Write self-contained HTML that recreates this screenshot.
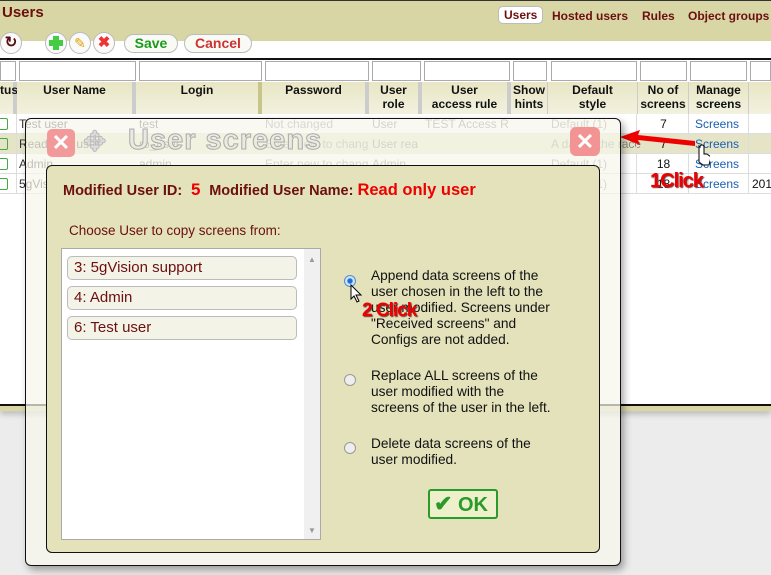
<!DOCTYPE html>
<html><head><meta charset="utf-8"><style>
*{box-sizing:border-box;margin:0;padding:0}
body{width:771px;height:575px;overflow:hidden;background:#ececec;font-family:"Liberation Sans",Arial,sans-serif;position:relative}
.abs{position:absolute}
#top{left:0;top:0;width:771px;height:41px;background:#d9d6a5;border-top:1px solid #333}
#tb{left:0;top:41px;width:771px;height:17px;background:#fff}
#main{left:0;top:58px;width:771px;height:348px;background:#fff;border-top:2px solid #111;border-bottom:2px solid #111}
#strip{left:0;top:406px;width:771px;height:5px;background:#d9d6a5;box-shadow:0 3px 6px rgba(0,0,0,.25)}
.tab{top:7px;font-size:12px;font-weight:bold;color:#6b0f0f}
.rb{border-radius:50%;border:1px solid #bbb;background:#fafafa;width:22px;height:22px;top:32px}
.pill{top:34px;height:19px;border:1px solid #bbb;border-radius:10px;background:#fafaf5;font-weight:bold;font-size:14px;text-align:center;line-height:17px}
.inp{top:61px;height:20px;border:1px solid #aaa;background:#fff}
.hd{top:82px;height:32px;background:linear-gradient(#e8e6c4,#f2f1df);font-weight:bold;font-size:12px;text-align:center;line-height:14px;padding-top:1px;color:#111;border-right:4px solid #ccc}
.chk{width:12px;height:12px;border:1px solid #4a4;border-radius:2px}
</style></head><body>
<div id="top" class="abs"></div>
<div class="abs" style="left:2px;top:4px;font-size:15px;font-weight:bold;color:#6b0f0f">Users</div>
<div class="abs tab" style="left:498px;top:6px;padding:1px 5px;border:1px solid #bbb;border-radius:5px;background:#fff">Users</div>
<div class="abs tab" style="left:552px;top:9px">Hosted users</div>
<div class="abs tab" style="left:642px;top:9px">Rules</div>
<div class="abs tab" style="left:688px;top:9px">Object groups</div>
<div id="tb" class="abs"></div>
<div class="abs rb" style="left:0;top:32px;font-size:15px;font-weight:bold;color:#5a1010;text-align:center;line-height:20px">↻</div>
<div class="abs rb" style="left:45px"><div class="abs" style="left:7px;top:3px;width:6px;height:14px;background:#4c4"></div><div class="abs" style="left:3px;top:7px;width:14px;height:6px;background:#4c4"></div></div>
<div class="abs rb" style="left:69px;color:#e3a000;font-size:14px;text-align:center;line-height:20px">✎</div>
<div class="abs rb" style="left:93px;color:#e33;font-size:15px;font-weight:bold;text-align:center;line-height:20px">✖</div>
<div class="abs pill" style="left:124px;width:54px;color:#1a9a1a">Save</div>
<div class="abs pill" style="left:184px;width:68px;color:#c33">Cancel</div>
<div id="main" class="abs"></div>
<div id="strip" class="abs"></div>
<div class="abs inp" style="left:0;width:16px"></div>
<div class="abs inp" style="left:19px;width:117px"></div>
<div class="abs inp" style="left:139px;width:123px"></div>
<div class="abs inp" style="left:265px;width:104px"></div>
<div class="abs inp" style="left:372px;width:49px"></div>
<div class="abs inp" style="left:424px;width:86px"></div>
<div class="abs inp" style="left:513px;width:34px"></div>
<div class="abs inp" style="left:551px;width:86px"></div>
<div class="abs inp" style="left:640px;width:47px"></div>
<div class="abs inp" style="left:690px;width:57px"></div>
<div class="abs inp" style="left:750px;width:21px"></div>
<div class="abs hd" style="left:0;width:17px;text-align:right">tus</div>
<div class="abs hd" style="left:17px;width:119px">User Name</div>
<div class="abs hd" style="left:136px;width:126px;border-right-color:#c8c58a">Login</div>
<div class="abs hd" style="left:262px;width:107px">Password</div>
<div class="abs hd" style="left:369px;width:53px">User<br>role</div>
<div class="abs hd" style="left:422px;width:89px">User<br>access rule</div>
<div class="abs hd" style="left:511px;width:37px;border-right-width:1px">Show<br>hints</div>
<div class="abs hd" style="left:548px;width:90px;border-right-width:1px">Default<br>style</div>
<div class="abs hd" style="left:638px;width:51px;border-right-width:1px">No of<br>screens</div>
<div class="abs hd" style="left:689px;width:60px;border-right-width:1px">Manage<br>screens</div>
<div class="abs hd" style="left:749px;width:22px;border-right-width:0"></div>
<div class="abs" style="left:0;top:114px;width:771px;height:80px">
 <div class="abs" style="left:0;top:20px;width:771px;height:20px;background:#e6e4c6"></div>
 <div class="abs" style="left:0;top:0;width:17px;height:80px;border-right:1px solid #ddd">
  <div class="chk abs" style="left:-4px;top:4px"></div><div class="chk abs" style="left:-4px;top:24px"></div><div class="chk abs" style="left:-4px;top:44px"></div><div class="chk abs" style="left:-4px;top:64px"></div></div>
 <div class="abs" style="left:0;top:19px;width:771px;border-top:1px solid #ddd"></div>
 <div class="abs" style="left:0;top:39px;width:771px;border-top:1px solid #ddd"></div>
 <div class="abs" style="left:0;top:59px;width:771px;border-top:1px solid #ddd"></div>
 <div class="abs" style="left:0;top:79px;width:771px;border-top:1px solid #ddd"></div>
 <div class="abs" style="left:19px;top:0;font-size:12px;line-height:20px;color:#333">Test user<br>Read only user<br>Admin<br>5gVision</div>
 <div class="abs" style="left:139px;top:0;font-size:12px;line-height:20px;color:#555">test<br>ro_user<br>admin</div>
 <div class="abs" style="left:265px;top:0;font-size:12px;line-height:20px;color:#888">Not changed<br>Enter new to chang<br>Enter new to chang</div>
 <div class="abs" style="left:372px;top:0;font-size:12px;line-height:20px;color:#777">User<br>User rea<br>Admin</div>
 <div class="abs" style="left:425px;top:0;font-size:12px;line-height:20px;color:#777">TEST Access R</div>
 <div class="abs" style="left:551px;top:0;font-size:12px;line-height:20px;color:#888">Default (1)<br>A day at the race<br>Default (1)<br>Default (1)</div>
 <div class="abs" style="left:638px;top:0;width:51px;text-align:center;font-size:12px;line-height:20px;color:#111">7<br>7<br>18<br>18</div>
 <div class="abs" style="left:695px;top:0;font-size:12px;line-height:20px;color:#1a5fb0">Screens<br>Screens<br>Screens<br>Screens</div>
 <div class="abs" style="left:752px;top:60px;font-size:12px;line-height:20px;color:#111">201</div>
 <div class="abs" style="left:636px;top:0;height:80px;border-left:1px solid #ddd"></div>
 <div class="abs" style="left:688px;top:0;height:80px;border-left:1px solid #ddd"></div>
 <div class="abs" style="left:748px;top:0;height:80px;border-left:1px solid #ddd"></div>
</div>
<svg class="abs" style="left:600px;top:125px" width="110" height="45">
 <polygon points="20,12 40,5 38,10 95,16 95,21 38,15 40,20" fill="#e00"/>
 <path d="M104 24 v16 l4 3 h6 l2-8 -4-3 -3 0 v-7 a2 2 0 0 0 -4 0z" fill="#fff" stroke="#000" stroke-width="1" transform="translate(-5,-3)"/>
</svg>
<div class="abs" style="left:650px;top:170px;font-size:20px;font-weight:bold;color:#e00;text-shadow:1px 1px 1px #733;letter-spacing:-1px">1Click</div>
<div class="abs" style="left:25px;top:118px;width:596px;height:448px;background:rgba(247,246,236,.72);border:1px solid #111;border-radius:6px;box-shadow:3px 4px 8px rgba(0,0,0,.35)"></div>
<div class="abs" style="left:47px;top:129px;width:28px;height:28px;background:#f29a9a;border-radius:5px;color:#fff;font-size:22px;font-weight:bold;text-align:center;line-height:28px">✕</div>
<div class="abs" style="left:83px;top:127px;font-size:28px;color:#ddd;-webkit-text-stroke:1px #bbb;line-height:30px">✥</div>
<div class="abs" style="left:128px;top:124px;font-size:29px;font-weight:bold;color:#eceae0;-webkit-text-stroke:1px #aaa;letter-spacing:1px">User screens</div>
<div class="abs" style="left:570px;top:127px;width:30px;height:29px;background:#f29494;border-radius:6px;color:#fff;font-size:22px;font-weight:bold;text-align:center;line-height:29px">✕</div>
<div class="abs" style="left:46px;top:165px;width:554px;height:388px;background:#e3e2bb;border:1px solid #111;border-radius:6px"></div>
<div class="abs" style="left:63px;top:180px;font-size:14.5px;font-weight:bold;color:#6b0f0f;white-space:nowrap">Modified User ID: <span style="color:#e00;font-size:17px">&nbsp;5&nbsp;</span> Modified User Name: <span style="color:#e00;font-size:16.5px">Read only user</span></div>
<div class="abs" style="left:69px;top:223px;font-size:13.5px;color:#6b0f0f">Choose User to copy screens from:</div>
<div class="abs" style="left:61px;top:248px;width:260px;height:292px;background:#fff;border:1px solid #aaa"></div>
<div class="abs" style="left:304px;top:249px;width:16px;height:290px;background:#f0f0f0;color:#999;font-size:8px;text-align:center"><div style="margin-top:6px">▲</div><div style="margin-top:262px">▼</div></div>
<div class="abs" style="left:67px;top:256px;width:230px;height:24px;background:#f4f3e8;border:1px solid #bbb;border-radius:5px;font-size:15px;color:#6b0f0f;padding-left:6px;line-height:22px">3: 5gVision support</div>
<div class="abs" style="left:67px;top:286px;width:230px;height:24px;background:#f4f3e8;border:1px solid #bbb;border-radius:5px;font-size:15px;color:#6b0f0f;padding-left:6px;line-height:22px">4: Admin</div>
<div class="abs" style="left:67px;top:316px;width:230px;height:24px;background:#f4f3e8;border:1px solid #bbb;border-radius:5px;font-size:15px;color:#6b0f0f;padding-left:6px;line-height:22px">6: Test user</div>
<div class="abs" style="left:344px;top:275px;width:12px;height:12px;border-radius:50%;border:1px solid #5a8ac8;background:radial-gradient(#1a6fd0 30%,#cfe3f8 45%)"></div>
<div class="abs" style="left:344px;top:374px;width:12px;height:12px;border-radius:50%;border:1px solid #999;background:#eee"></div>
<div class="abs" style="left:344px;top:442px;width:12px;height:12px;border-radius:50%;border:1px solid #999;background:#eee"></div>
<div class="abs" style="left:371px;top:268px;font-size:13.7px;line-height:16px;color:#111">Append data screens of the<br>user chosen in the left to the<br>user modified. Screens under<br>"Received screens" and<br>Configs are not added.</div>
<div class="abs" style="left:371px;top:368px;font-size:13.7px;line-height:16px;color:#111">Replace ALL screens of the<br>user modified with the<br>screens of the user in the left.</div>
<div class="abs" style="left:371px;top:436px;font-size:13.7px;line-height:16px;color:#111">Delete data screens of the<br>user modified.</div>
<svg class="abs" style="left:350px;top:284px" width="14" height="20"><path d="M1 1 v14 l3-3 3 6 2-1 -3-6 h5z" fill="#fff" stroke="#000"/></svg>
<div class="abs" style="left:362px;top:300px;font-size:19px;font-weight:bold;color:#e00;text-shadow:1px 1px 1px #733;letter-spacing:-1px">2 Click</div>
<div class="abs" style="left:428px;top:489px;width:70px;height:30px;border:2px solid #2a9a2a;border-radius:3px;background:#eef0cc;color:#2a9a2a;font-size:20px;font-weight:bold;line-height:26px;padding-left:4px;white-space:nowrap"><span style="font-size:22px">✔</span> OK</div>
</body></html>
